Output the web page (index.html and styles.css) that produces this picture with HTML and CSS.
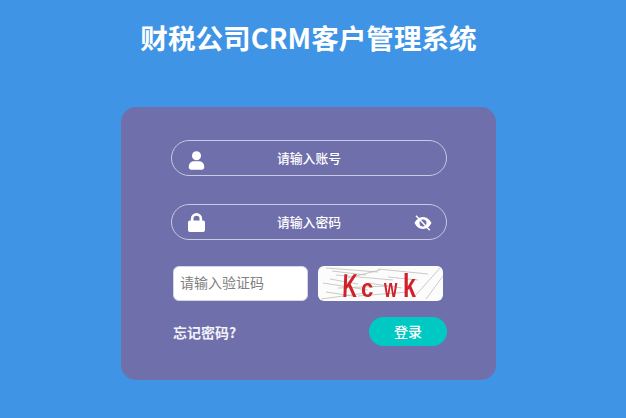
FILE: index.html
```html
<!DOCTYPE html>
<html lang="zh">
<head>
<meta charset="utf-8">
<title>财税公司CRM客户管理系统</title>
<link rel="stylesheet" href="styles.css">
</head>
<body>
<main class="page">
  <h1 class="title">财税公司CRM客户管理系统</h1>
  <form class="card">
    <div class="field">
      <svg class="icon" viewBox="0 0 18 20" aria-hidden="true"><circle cx="9" cy="5" r="4.800"/><path d="M0.800 17c0-4 2.600-6.200 5.400-6.200h5.600c2.800 0 5.400 2.200 5.400 6.200 0 1.800-1 2.800-2.600 2.800H3.400C1.800 19.800.8 18.800.8 17z"/></svg>
      <span class="ph">请输入账号</span>
    </div>
    <div class="field">
      <svg class="icon lock" viewBox="0 0 18 20" aria-hidden="true"><path fill-rule="evenodd" d="M3 8V6a6 6 0 0 1 12 0v2h1q2 0 2 2v8q0 2-2 2H2q-2 0-2-2v-8q0-2 2-2zM5.800 8h6.400V6a3.200 3.200 0 0 0-6.400 0z"/></svg>
      <span class="ph">请输入密码</span>
      <svg class="eye" viewBox="0 0 18 16" aria-hidden="true"><path fill-rule="evenodd" d="M9 2c4 0 7 3 8.500 6-1.500 3-4.500 6-8.500 6S2 11 .5 8C2 5 5 2 9 2zm0 2.500a3.500 3.500 0 1 0 0 7 3.500 3.500 0 0 0 0-7z"/><path class="slash" d="M2 .8 15.800 15.200"/></svg>
    </div>
    <div class="verify">
      <input class="code" type="text" placeholder="请输入验证码">
      <svg class="captcha" viewBox="0 0 125 35" aria-label="验证码">
        <g class="noise">
          <path d="M8 2 60 6M14 5 48 9M18 9 75 14M30 12 62 4M5 17 50 24M12 13 40 18M20 22 70 20M3 33 48 27M8 26 35 30M40 30 90 26M50 17 84 22M60 3 110 8M70 11 100 14M96 31 122 2M108 33 125 10"/>
        </g>
        <g class="glyphs">
          <text transform="translate(24 31) scale(.62 1) skewX(-4)">K</text>
          <text class="small" transform="translate(43 31) scale(.85 1)">c</text>
          <text class="small" transform="translate(66 31) scale(.66 1)">w</text>
          <text transform="translate(85 31) scale(.7 1)">k</text>
        </g>
      </svg>
    </div>
    <div class="actions">
      <a class="forgot">忘记密码?</a>
      <button class="login" type="button">登录</button>
    </div>
  </form>
</main>
</body>
</html>
```
FILE: styles.css
```css
* { box-sizing: border-box; }
html, body { margin: 0; height: 100%; }
body {
  background: #4094e6;
  font-family: "Noto Sans CJK SC", "Noto Sans", sans-serif;
  overflow: hidden;
}
.page {
  width: 617px;
  display: flex;
  flex-direction: column;
  align-items: center;
}
.title {
  margin: 17px 0 50px;
  height: 40px;
  line-height: 40px;
  font-size: 27.6px;
  font-weight: 700;
  color: #fff;
  white-space: nowrap;
}
.card {
  width: 375px;
  height: 273px;
  background: #6f6fab;
  border-radius: 15px;
  padding: 33px 49px 0 50px;
  display: flex;
  flex-direction: column;
}
.field {
  display: flex;
  align-items: center;
  justify-content: center;
  position: relative;
  height: 36px;
  margin-bottom: 28px;
  border: 1px solid #c9c9e0;
  border-radius: 18px;
  padding-bottom: 2px;
}
.ph {
  font-size: 12.8px;
  font-weight: 500;
  color: #fff;
}
.icon {
  position: absolute;
  left: 16px;
  top: 10px;
  width: 17px;
  height: 19px;
  fill: #fff;
}
.lock { top: 8px; }
.eye {
  position: absolute;
  right: 14px;
  top: 10px;
  width: 18px;
  height: 16px;
  fill: #fff;
}
.eye .slash { fill: none; stroke: #fff; stroke-width: 1.500; }
.verify {
  display: flex;
  align-items: flex-start;
  padding-left: 2px;
  margin-top: -2px;
  gap: 10px;
}
.code {
  width: 135px;
  height: 35px;
  border: 1px solid #d5d5e6;
  border-radius: 6px;
  background: #fff;
  padding: 0 6px 3px;
  font: 14px "Noto Sans CJK SC", sans-serif;
  outline: none;
}
.code::placeholder { color: #808080; opacity: 1; }
.captcha {
  width: 125px;
  height: 35px;
  background: #fcfcfc;
  border-radius: 6px;
  overflow: visible;
}
.noise path {
  stroke: #bdbdb8;
  stroke-width: 0.800;
  fill: none;
}
.glyphs {
  filter: blur(0.35px);
}
.captcha text {
  font-family: "Liberation Sans", sans-serif;
  font-size: 33px;
  font-weight: 700;
  fill: #d2202a;
}
.captcha .small { font-size: 26px; }
.actions {
  display: flex;
  align-items: center;
  justify-content: space-between;
  padding-left: 2px;
  margin-top: 16px;
}
.forgot {
  font-size: 14px;
  font-weight: 700;
  color: #f2f2f8;
}
.login {
  width: 78px;
  height: 29px;
  border: 0;
  border-radius: 15px;
  background: #00c9c4;
  color: #fff;
  font: 500 14px "Noto Sans CJK SC", sans-serif;
  padding: 0 0 2px;
}
```
